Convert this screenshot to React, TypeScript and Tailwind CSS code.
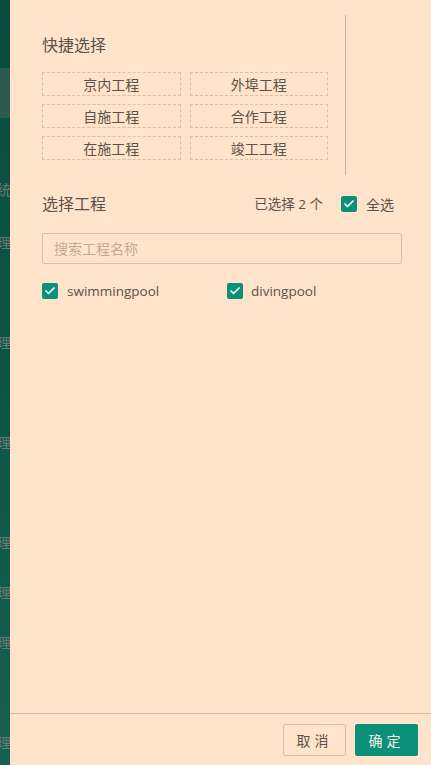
import { Check } from 'lucide-react';

const quick = ['京内工程', '外埠工程', '自施工程', '合作工程', '在施工程', '竣工工程'];

// bits of the menu behind the drawer, only the left edge shows
const sideItems = [
  { top: 'mt-[180px]', text: '统' },
  { top: 'mt-[33px]', text: '理' },
  { top: 'mt-[80px]', text: '理' },
  { top: 'mt-[80px]', text: '理' },
  { top: 'mt-[80px]', text: '理' },
  { top: 'mt-[30px]', text: '理' },
  { top: 'mt-[30px]', text: '理' },
  { top: 'mt-[80px]', text: '理' },
];

const Box = () => (
  <span className="flex h-4 w-4 shrink-0 items-center justify-center rounded-[2px] bg-[#0b917a]">
    <Check className="h-3 w-3 text-white" strokeWidth={3.5} />
  </span>
);

export default function App() {
  return (
    <div
      className="flex h-[765px] w-[431px] overflow-hidden text-[#5a524c]"
      style={{ fontFamily: '"Open Sans", "Noto Sans CJK SC", sans-serif' }}
    >
      <div className="relative flex w-[10px] shrink-0 flex-col overflow-hidden bg-gradient-to-b from-[#0a4b3e] via-[#0b5647] to-[#156050]">
        <div className="absolute left-0 top-[68px] h-[50px] w-[10px] bg-[#2d5a4d]" />
        {sideItems.map((s, i) => (
          <span
            key={i}
            className={`${s.top} -ml-[3px] text-[14px] leading-[20px] text-[#6b7b72]`}
          >
            {s.text}
          </span>
        ))}
      </div>

      <div className="flex flex-1 flex-col bg-[#ffe3ca]">
        <div className="flex-1 pl-[32px] pr-[29px]">
          <div className="flex pt-[15px]">
            <div className="w-[286px] pt-[19px]">
              <div className="text-[16px] leading-[22px] text-[#5a524c]">快捷选择</div>
              <div className="mt-[16px] grid grid-cols-2 gap-x-[9px] gap-y-[8px]">
                {quick.map((q) => (
                  <div
                    key={q}
                    className="flex h-[24px] items-center justify-center border border-dashed border-[#d8bea8] text-[14px] text-[#5a524c]"
                  >
                    {q}
                  </div>
                ))}
              </div>
            </div>
            <div className="ml-[17px] h-[160px] w-px bg-[#c9b3a2]" />
          </div>

          <div className="mt-[18px] flex h-[22px] items-center pr-[8px]">
            <span className="text-[16px] text-[#5a524c]">选择工程</span>
            <span className="ml-auto text-[13.5px]">已选择 2 个</span>
            <span className="ml-[18px] flex items-center gap-[9px] text-[14px]">
              <Box />
              全选
            </span>
          </div>

          <div className="mt-[18px] flex h-[31px] items-center rounded-[2px] border border-[#d8bfa8] px-[11px] text-[14px] text-[#bfab98]">
            搜索工程名称
          </div>

          <div className="mt-[17px] grid grid-cols-[185px_1fr] text-[13.5px]">
            <label className="flex items-center gap-[9px]">
              <Box />
              swimmingpool
            </label>
            <label className="flex items-center gap-[8px]">
              <Box />
              divingpool
            </label>
          </div>
        </div>

        <div className="flex justify-end gap-[9px] border-t border-[#d4bba6] pb-[9px] pr-[13px] pt-[10px]">
          <button className="h-[32px] w-[63px] rounded-[2px] border border-[#d8bfa8] text-[14px] tracking-[4px] text-[#5a524c]">
            取消
          </button>
          <button className="h-[32px] w-[63px] rounded-[2px] bg-[#0b917a] text-[14px] tracking-[4px] text-[#f3efe4]">
            确定
          </button>
        </div>
      </div>
    </div>
  );
}
